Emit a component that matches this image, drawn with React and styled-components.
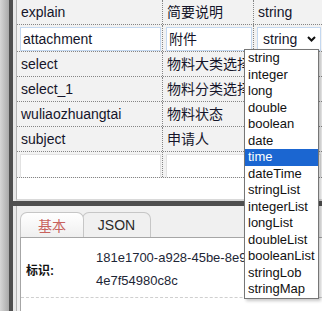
import React from 'react'
import styled, { createGlobalStyle } from 'styled-components'

const GlobalStyle = createGlobalStyle`
  html, body {
    margin: 0;
    padding: 0;
  }
  body {
    width: 322px;
    height: 311px;
    overflow: hidden;
    background: #f0f0f0;
    font-family: "Liberation Sans", "Noto Sans CJK SC", sans-serif;
  }
`

const Frame = styled.div`
  position: relative;
  display: flex;
  width: 322px;
  height: 311px;
  overflow: hidden;
`

const Gutter = styled.div`
  width: 9px;
  flex: none;
  background: linear-gradient(to right, #d6d6d6, #a9a9a9);
`

const SplitV = styled.div`
  width: 4px;
  flex: none;
  background: #4f4f4f;
`

const Main = styled.div`
  flex: 1;
  min-width: 0;
  display: flex;
  flex-direction: column;
  background: #e8e8e8;
`

const TopPane = styled.div`
  height: 201px;
  flex: none;
  display: flex;
  padding-left: 3px;
  box-sizing: border-box;
`

const Grid = styled.div`
  flex: 1;
  min-width: 0;
  background: #fff;
  border-left: 1px solid #b6b6b6;
  border-bottom: 2px solid #d9d9d9;
  overflow: hidden;
`

const Row = styled.div`
  display: grid;
  grid-template-columns: 146px 91px 1fr;
  height: ${({ $h }) => $h || 25}px;
  box-sizing: border-box;
  border-bottom: 1px dotted #858585;
  background: #f2f2f2;
`

const Cell = styled.div`
  display: flex;
  align-items: ${({ $edit }) => ($edit ? 'stretch' : 'center')};
  padding: ${({ $edit }) => ($edit ? '2px 1px 0 3px' : '0 4px')};
  border-right: 1px dotted #858585;
  font-size: 14px;
  line-height: 18px;
  color: #15152a;
  white-space: nowrap;
  overflow: hidden;
  &:last-child {
    border-right: none;
  }
`

const Field = styled.div`
  flex: 1;
  min-width: 0;
  display: flex;
  align-items: center;
  justify-content: space-between;
  padding: 0 4px 0 ${({ $select }) => ($select ? 5 : 2)}px;
  background: #fff;
  border: 1px solid ${({ $blank }) => ($blank ? '#e2e2e2' : '#c4d8f0')};
  border-bottom: ${({ $blank }) => ($blank ? 'none' : '1px solid #c4d8f0')};
`

const SplitH = styled.div`
  height: 5px;
  flex: none;
  background: #4f4f4f;
`

const BottomPane = styled.div`
  flex: 1;
  display: flex;
  padding-left: 3px;
  min-height: 0;
`

const Panel = styled.div`
  flex: 1;
  min-width: 0;
  display: flex;
  flex-direction: column;
  background: #f0f0f0;
  border-left: 1px solid #b6b6b6;
  padding: 6px 0 0 3px;
`

const TabBar = styled.div`
  display: flex;
  align-items: flex-end;
  height: 25px;
`

const Tab = styled.div`
  width: ${({ $w }) => $w}px;
  height: 24px;
  margin-left: ${({ $first }) => ($first ? 0 : -2)}px;
  display: flex;
  align-items: center;
  justify-content: center;
  border: 1px solid #c6c6c6;
  border-bottom: none;
  border-radius: 7px 7px 0 0;
  background: ${({ $active }) =>
    $active ? 'linear-gradient(#ffffff, #efefef)' : '#f0f0f0'};
  color: ${({ $active }) => ($active ? '#c8625d' : '#2a2a2a')};
  font-size: 14px;
  position: relative;
  z-index: ${({ $active }) => ($active ? 1 : 0)};
`

const Content = styled.div`
  flex: 1;
  background: #fff;
  border-top: 1px solid #a6a6a6;
  border-left: 1px solid #a6a6a6;
`

const Prop = styled.div`
  display: grid;
  grid-template-columns: 75px 1fr;
  align-items: center;
  padding: ${({ $top }) => $top || 8}px 0 5px;
  border-bottom: 1px dashed #cfcfcf;
`

const Label = styled.div`
  padding-left: 5px;
  font-size: 12px;
  font-weight: bold;
  color: #111;
`

const Value = styled.div`
  padding-right: 8px;
  font-size: 13px;
  line-height: 23px;
  color: #1d2636;
`

const Dropdown = styled.ul`
  position: absolute;
  left: 244px;
  top: 49px;
  width: 73px;
  margin: 0;
  padding: 0;
  list-style: none;
  background: #fff;
  border: 1px solid #767676;
  box-shadow: 2px 2px 3px rgba(0, 0, 0, 0.22);
  z-index: 5;
`

const Option = styled.li`
  height: 16.5px;
  line-height: 16.5px;
  padding: 0 3px;
  font-size: 13px;
  color: ${({ $on }) => ($on ? '#fff' : '#111')};
  background: ${({ $on }) => ($on ? '#1b66d1' : 'transparent')};
  white-space: nowrap;
`

const Chevron = () => (
  <svg width="9" height="6" viewBox="0 0 9 6">
    <path d="M1 1 L4.5 4.5 L8 1" fill="none" stroke="#111" strokeWidth="2" />
  </svg>
)

const rows = [
  ['select', '物料大类选择'],
  ['select_1', '物料分类选择'],
  ['wuliaozhuangtai', '物料状态'],
  ['subject', '申请人'],
]

const types = [
  'string', 'integer', 'long', 'double', 'boolean', 'date', 'time', 'dateTime',
  'stringList', 'integerList', 'longList', 'doubleList', 'booleanList', 'stringLob', 'stringMap',
]

export default function App() {
  return (
    <>
      <GlobalStyle />
      <Frame>
        <Gutter />
        <SplitV />
        <Main>
          <TopPane>
            <Grid>
              <Row>
                <Cell>explain</Cell>
                <Cell>简要说明</Cell>
                <Cell>string</Cell>
              </Row>
              <Row $h={27}>
                <Cell $edit>
                  <Field>attachment</Field>
                </Cell>
                <Cell $edit>
                  <Field>附件</Field>
                </Cell>
                <Cell $edit>
                  <Field $select>
                    string
                    <Chevron />
                  </Field>
                </Cell>
              </Row>
              {rows.map(([name, title]) => (
                <Row key={name}>
                  <Cell>{name}</Cell>
                  <Cell>{title}</Cell>
                  <Cell />
                </Row>
              ))}
              <Row $h={26}>
                <Cell $edit>
                  <Field $blank />
                </Cell>
                <Cell $edit>
                  <Field $blank />
                </Cell>
                <Cell $edit>
                  <Field $blank />
                </Cell>
              </Row>
            </Grid>
          </TopPane>
          <SplitH />
          <BottomPane>
            <Panel>
              <TabBar>
                <Tab $first $active $w={62}>基本</Tab>
                <Tab $w={67}>JSON</Tab>
              </TabBar>
              <Content>
                <Prop>
                  <Label>标识:</Label>
                  <Value>181e1700-a928-45be-8e94-4e7f54980c8c</Value>
                </Prop>
                <Prop $top={11}>
                  <Label>名称:</Label>
                  <Value>attachment</Value>
                </Prop>
              </Content>
            </Panel>
          </BottomPane>
        </Main>
        <Dropdown>
          {types.map(t => (
            <Option key={t} $on={t === 'time'}>
              {t}
            </Option>
          ))}
        </Dropdown>
      </Frame>
    </>
  )
}
